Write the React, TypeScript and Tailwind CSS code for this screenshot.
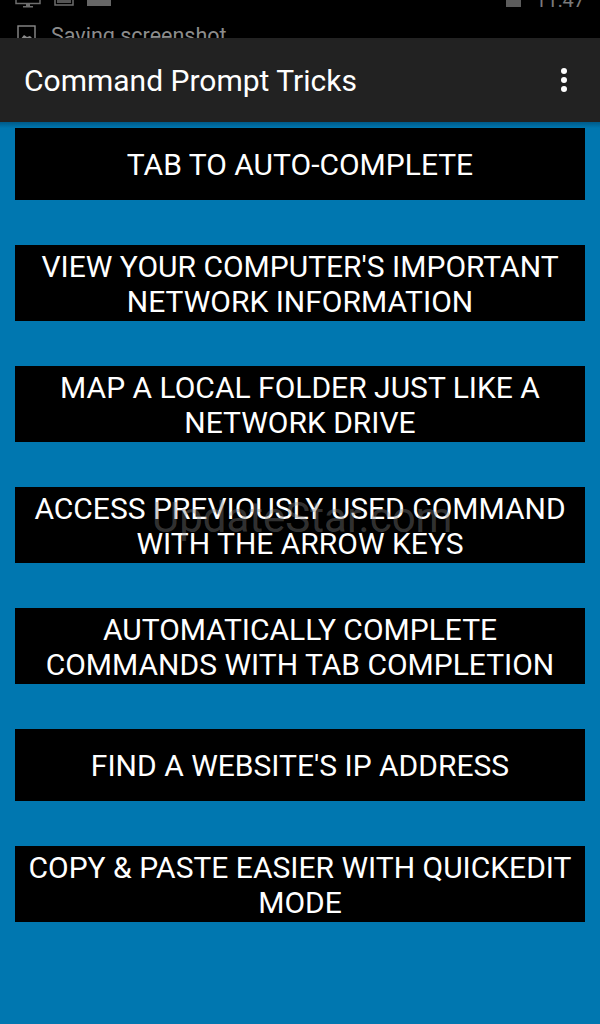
const TRICKS = [
  'TAB TO AUTO-COMPLETE',
  "VIEW YOUR COMPUTER'S IMPORTANT NETWORK INFORMATION",
  'MAP A LOCAL FOLDER JUST LIKE A NETWORK DRIVE',
  'ACCESS PREVIOUSLY USED COMMAND WITH THE ARROW KEYS',
  'AUTOMATICALLY COMPLETE COMMANDS WITH TAB COMPLETION',
  "FIND A WEBSITE'S IP ADDRESS",
  'COPY & PASTE EASIER WITH QUICKEDIT MODE',
];

function StatusArea() {
  return (
    <div className="h-[38px] overflow-hidden bg-black">
      <div className="flex h-[9px] items-start pl-[15px] pr-[15px]">
        <svg width="26" height="9" viewBox="0 0 26 9" fill="none" className="shrink-0">
          <path d="M1 0v3.5h24V0" stroke="#6e6e6e" strokeWidth="1.5" />
          <path d="M11 4h4v2h3v1.5H8V6h3z" fill="#6e6e6e" />
        </svg>
        <svg width="20" height="6" viewBox="0 0 20 6" fill="none" className="ml-[13px] shrink-0">
          <path d="M1 0v5h18V0" stroke="#6e6e6e" strokeWidth="1.5" />
          <rect x="3" y="0" width="14" height="3" fill="#555" />
        </svg>
        <div className="ml-[13px] h-[6px] w-[24px] shrink-0 bg-[#666]" />
        <div className="ml-auto h-[7px] w-[15px] bg-[#5c5c5c]" />
        <div className="ml-[14px] h-[7px] overflow-hidden">
          <div className="-mt-[12px] text-[20px] leading-[24px] text-[#7a7a7a]">11:47</div>
        </div>
      </div>
      <div className="mt-[16px] flex items-start pl-[17px]">
        <svg width="20" height="20" viewBox="0 0 20 20" fill="none" className="shrink-0">
          <rect x="1" y="1" width="17" height="17" stroke="#8a8a8a" strokeWidth="1.4" />
          <path d="M3 15l4-5 3 2 3-1 4 4v3H3z" fill="#8a8a8a" />
        </svg>
        <span className="-mt-[2px] ml-[14px] text-[21.5px] leading-[26px] text-[#8c8c8c]">Saving screenshot</span>
      </div>
    </div>
  );
}

function Toolbar() {
  return (
    <div className="flex h-[84px] items-center justify-between bg-[#222222] pl-[24px] pr-[33px]">
      <h1 className="pt-[1px] text-[30px] leading-[34px] text-white">Command Prompt Tricks</h1>
      <div className="flex flex-col gap-[3px]">
        <span className="h-[6px] w-[6px] rounded-full bg-white" />
        <span className="h-[6px] w-[6px] rounded-full bg-white" />
        <span className="h-[6px] w-[6px] rounded-full bg-white" />
      </div>
    </div>
  );
}

export default function App() {
  return (
    <div className="relative flex h-[1024px] w-[600px] flex-col overflow-hidden bg-[#0077b0] font-['Roboto',sans-serif]">
      <StatusArea />
      <Toolbar />
      <div className="h-[6px] bg-gradient-to-b from-[#005a88] to-[#0077b0]" />
      <div className="flex flex-col gap-[45px] px-[15px]">
        {TRICKS.map((trick) => (
          <button
            key={trick}
            type="button"
            className={`flex min-h-[72px] items-center justify-center bg-black px-[10px] text-center text-[30px] leading-[35px] text-white ${
              trick.length < 30 ? 'py-[3px]' : 'pt-[4px] pb-[2px]'
            }`}
          >
            {trick}
          </button>
        ))}
      </div>
      <span className="pointer-events-none absolute left-[152px] top-[493px] text-[42px] leading-[50px] text-[#808080]/40">
        UpdateStar.com
      </span>
    </div>
  );
}
